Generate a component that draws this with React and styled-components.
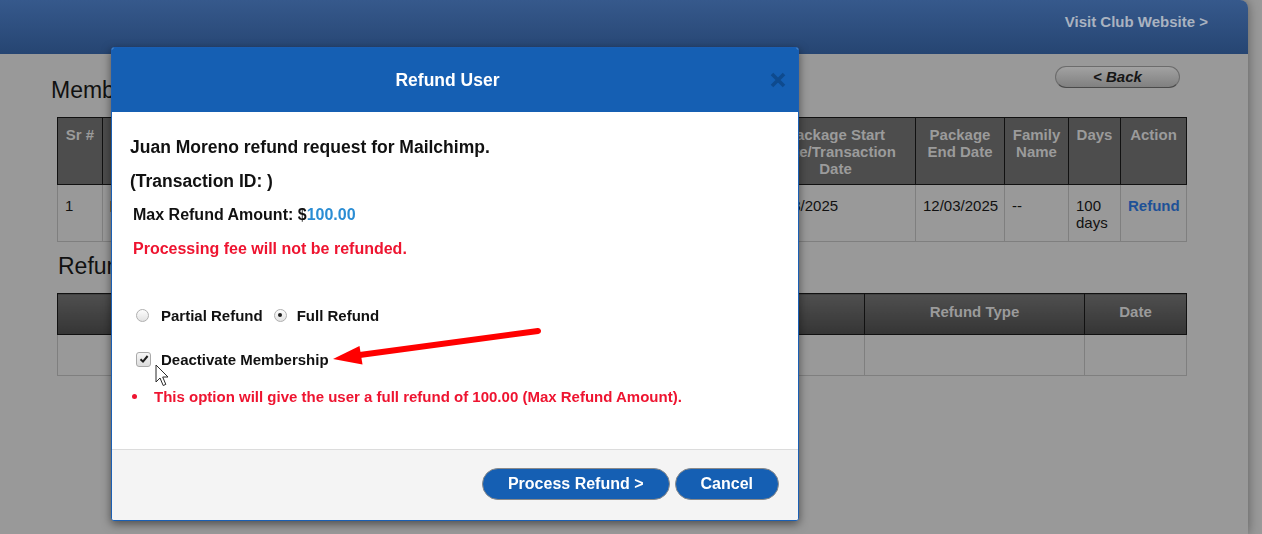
import React from "react";
import styled, { createGlobalStyle } from "styled-components";

const GlobalStyle = createGlobalStyle`
  * { box-sizing: border-box; }
  html, body { margin: 0; padding: 0; }
  body {
    background: #999;
    font-family: "Liberation Sans", Arial, sans-serif;
    color: #111;
    overflow: hidden;
  }
`;

// widths of the columns, the middle ones sit under the modal
const memberCols = [45, 180, 200, 120, 153, 160, 89, 64, 52, 66];
const refundCols = [250, 250, 307, 220, 102];

const members = [
  {
    sr: 1,
    start: "12/03/2025",
    end: "12/03/2025",
    family: "--",
    days: "100 days",
  },
];

const App = () => {
  return (
    <>
      <GlobalStyle />
      <Page>
        <TopBar>
          <VisitLink>Visit Club Website &gt;</VisitLink>
        </TopBar>

        <Content>
          <TopRow>
            <SectionTitle>Membership Packages</SectionTitle>
            <BackButton>&lt; Back</BackButton>
          </TopRow>

          <Table>
            <colgroup>
              {memberCols.map((w, i) => (
                <col key={i} style={{ width: w }} />
              ))}
            </colgroup>
            <thead>
              <tr>
                <Th>Sr #</Th>
                <Th />
                <Th />
                <Th />
                <Th />
                <Th>Package Start Date/Transaction Date</Th>
                <Th>Package End Date</Th>
                <Th>Family Name</Th>
                <Th>Days</Th>
                <Th>Action</Th>
              </tr>
            </thead>
            <tbody>
              {members.map((m) => (
                <tr key={m.sr}>
                  <Td>{m.sr}</Td>
                  <Td>
                    <Thumb />
                  </Td>
                  <Td />
                  <Td />
                  <Td />
                  <Td>{m.start}</Td>
                  <Td>{m.end}</Td>
                  <Td>{m.family}</Td>
                  <Td>{m.days}</Td>
                  <Td>
                    <RowLink>Refund</RowLink>
                  </Td>
                </tr>
              ))}
            </tbody>
          </Table>

          <SectionTitle $second>Refund History</SectionTitle>

          <Table>
            <colgroup>
              {refundCols.map((w, i) => (
                <col key={i} style={{ width: w }} />
              ))}
            </colgroup>
            <thead>
              <tr>
                <Th $gradient />
                <Th $gradient />
                <Th $gradient />
                <Th $gradient>Refund Type</Th>
                <Th $gradient>Date</Th>
              </tr>
            </thead>
            <tbody>
              <tr>
                {refundCols.map((_, i) => (
                  <EmptyTd key={i} />
                ))}
              </tr>
            </tbody>
          </Table>
        </Content>
      </Page>

      <Modal>
        <ModalHeader>
          <ModalTitle>Refund User</ModalTitle>
          <CloseButton aria-label="close">
            <svg width="16" height="16" viewBox="0 0 16 16">
              <path d="M2 2 L14 14 M14 2 L2 14" stroke="#0e4a8e" strokeWidth="3.6" />
            </svg>
          </CloseButton>
        </ModalHeader>

        <ModalBody>
          <Heading>Juan Moreno refund request for Mailchimp.</Heading>
          <Heading>(Transaction ID: )</Heading>
          <InfoLine>
            Max Refund Amount: $<Amount>100.00</Amount>
          </InfoLine>
          <InfoLine $red>Processing fee will not be refunded.</InfoLine>

          <OptionRow $top={39}>
            <RadioDot />
            <OptionLabel $gap={12}>Partial Refund</OptionLabel>
            <RadioDot $checked />
            <OptionLabel $gap={10}>Full Refund</OptionLabel>
          </OptionRow>

          <OptionRow $top={24}>
            <CheckBox>
              <svg width="10" height="10" viewBox="0 0 10 10">
                <path d="M1.5 5.2 L4 7.6 L8.6 2" stroke="#1c1c1c" strokeWidth="2" fill="none" />
              </svg>
            </CheckBox>
            <OptionLabel $gap={10}>Deactivate Membership</OptionLabel>
          </OptionRow>

          <BulletRow>
            <Dot />
            <span>This option will give the user a full refund of 100.00 (Max Refund Amount).</span>
          </BulletRow>
        </ModalBody>

        <ModalFooter>
          <PillButton>Process Refund &gt;</PillButton>
          <PillButton>Cancel</PillButton>
        </ModalFooter>
      </Modal>

      <Annotation width="1262" height="534" viewBox="0 0 1262 534">
        <line x1="538" y1="331" x2="356" y2="355.5" stroke="#ff0000" strokeWidth="6" strokeLinecap="round" />
        <polygon points="333,359 359.5,346 362.5,364.5" fill="#ff0000" />
        <path
          d="M156 365 L156 382 L160 378 L163.2 385.5 L165.8 384.4 L162.7 377 L168 377 Z"
          fill="#fff"
          stroke="#2a2a2a"
          strokeWidth="1"
          strokeLinejoin="round"
        />
      </Annotation>
    </>
  );
};

export default App;

const Page = styled.div`
  width: 1248px;
  height: 534px;
  background: #999;
  border-top-right-radius: 8px;
  box-shadow: 0 0 12px rgba(0, 0, 0, 0.4);
`;

const TopBar = styled.header`
  height: 54px;
  display: flex;
  justify-content: flex-end;
  align-items: flex-start;
  padding: 13px 40px 0 0;
  background: linear-gradient(#36598c, #264572);
  border-top-right-radius: 8px;
`;

const VisitLink = styled.a`
  font-size: 15px;
  line-height: 18px;
  font-weight: bold;
  color: #aab3c0;
  cursor: pointer;
`;

const Content = styled.div`
  padding: 0 62px 0 51px;
`;

const TopRow = styled.div`
  display: flex;
  justify-content: space-between;
  align-items: flex-start;
`;

const SectionTitle = styled.h2`
  margin: ${(p) => (p.$second ? "10px 0 0 7px" : "22px 0 0 0")};
  font-size: 23px;
  line-height: 28px;
  font-weight: normal;
  color: #111;
  white-space: nowrap;
`;

const BackButton = styled.button`
  margin: 12px 6px 0 0;
  width: 125px;
  height: 22px;
  padding: 0;
  border-radius: 11px;
  border: 1px solid #6c6c6c;
  border-bottom-color: #4a4a4a;
  background: linear-gradient(#a2a2a2, #808080);
  font-family: inherit;
  font-size: 15px;
  font-style: italic;
  font-weight: bold;
  color: #161616;
  line-height: 18px;
`;

const Table = styled.table`
  margin: 13px 0 0 6px;
  width: 1129px;
  border-collapse: collapse;
  table-layout: fixed;
`;

const Th = styled.th`
  padding: ${(p) => (p.$gradient ? "9px 6px 14px" : "8px 6px 7px")};
  background: ${(p) => (p.$gradient ? "linear-gradient(#4f4f4f, #353535)" : "#4d4d4d")};
  border: 1px solid #111;
  color: #9b9b9b;
  font-size: 15px;
  line-height: 17px;
  font-weight: bold;
  text-align: center;
  vertical-align: top;
`;

const Td = styled.td`
  padding: 12px 7px 10px;
  border: 1px solid #7f7f7f;
  font-size: 15px;
  line-height: 17px;
  color: #111;
  vertical-align: top;
`;

const EmptyTd = styled.td`
  height: 41px;
  border: 1px solid #7f7f7f;
`;

const Thumb = styled.span`
  display: inline-block;
  width: 16px;
  height: 11px;
  margin-top: 4px;
  background: #8a6a3a;
`;

const RowLink = styled.a`
  color: #1d5197;
  font-weight: bold;
  cursor: pointer;
`;

const Modal = styled.div`
  position: fixed;
  top: 47px;
  left: 111px;
  width: 688px;
  background: #fff;
  border: 1px solid #1a5fb4;
  border-radius: 3px;
  box-shadow: 0 3px 10px rgba(0, 0, 0, 0.5);
  overflow: hidden;
`;

const ModalHeader = styled.div`
  height: 64px;
  display: flex;
  align-items: center;
  padding: 0 12px 0 13px;
  background: #155fb3;
`;

const ModalTitle = styled.h3`
  flex: 1;
  margin: 0;
  text-align: center;
  font-size: 17.5px;
  font-weight: bold;
  color: #fff;
`;

const CloseButton = styled.button`
  display: flex;
  padding: 0;
  border: none;
  background: transparent;
  cursor: pointer;
`;

const ModalBody = styled.div`
  padding: 18px 19px 43px 18px;
`;

const Heading = styled.h4`
  margin: 0;
  font-size: 17.5px;
  line-height: 34px;
  font-weight: bold;
  color: #111;
`;

const InfoLine = styled.p`
  margin: 0;
  padding-left: 3px;
  font-size: 16px;
  line-height: 34px;
  font-weight: bold;
  color: ${(p) => (p.$red ? "#ee1430" : "#111")};
`;

const Amount = styled.span`
  color: #2a8dd4;
`;

const OptionRow = styled.div`
  display: flex;
  align-items: center;
  height: 20px;
  margin-top: ${(p) => p.$top}px;
  padding-left: 6px;
`;

const RadioDot = styled.span`
  width: 13px;
  height: 13px;
  flex-shrink: 0;
  border-radius: 50%;
  border: 1px solid #b0b0b0;
  background: linear-gradient(#fdfdfd, #e2e2e2);
  display: flex;
  align-items: center;
  justify-content: center;

  &::after {
    content: "";
    width: 4px;
    height: 4px;
    border-radius: 50%;
    background: ${(p) => (p.$checked ? "#1e1e1e" : "transparent")};
  }
`;

const CheckBox = styled.span`
  width: 15px;
  height: 15px;
  flex-shrink: 0;
  border-radius: 3px;
  border: 1px solid #a9a9a9;
  background: linear-gradient(#f7f7f7, #dcdcdc);
  display: flex;
  align-items: center;
  justify-content: center;
`;

const OptionLabel = styled.span`
  margin: 0 11px 0 ${(p) => p.$gap}px;
  font-size: 15px;
  font-weight: bold;
  color: #111;
  white-space: nowrap;
`;

const BulletRow = styled.div`
  display: flex;
  align-items: center;
  height: 20px;
  margin-top: 17px;
  padding-left: 2px;
  font-size: 15px;
  font-weight: bold;
  color: #ee1430;
  white-space: nowrap;
`;

const Dot = styled.span`
  width: 5px;
  height: 5px;
  margin-right: 17px;
  border-radius: 50%;
  background: #ee1430;
`;

const ModalFooter = styled.div`
  display: flex;
  justify-content: flex-end;
  gap: 5px;
  padding: 18px 19px 20px;
  background: #f4f4f4;
  border-top: 1px solid #dcdcdc;
`;

const PillButton = styled.button`
  height: 32px;
  padding: 0 25px;
  border-radius: 16px;
  border: 1px solid #8a8a8a;
  background: #155fb3;
  font-family: inherit;
  font-size: 16px;
  font-weight: bold;
  color: #fff;
  cursor: pointer;
`;

const Annotation = styled.svg`
  position: fixed;
  top: 0;
  left: 0;
  pointer-events: none;
`;
